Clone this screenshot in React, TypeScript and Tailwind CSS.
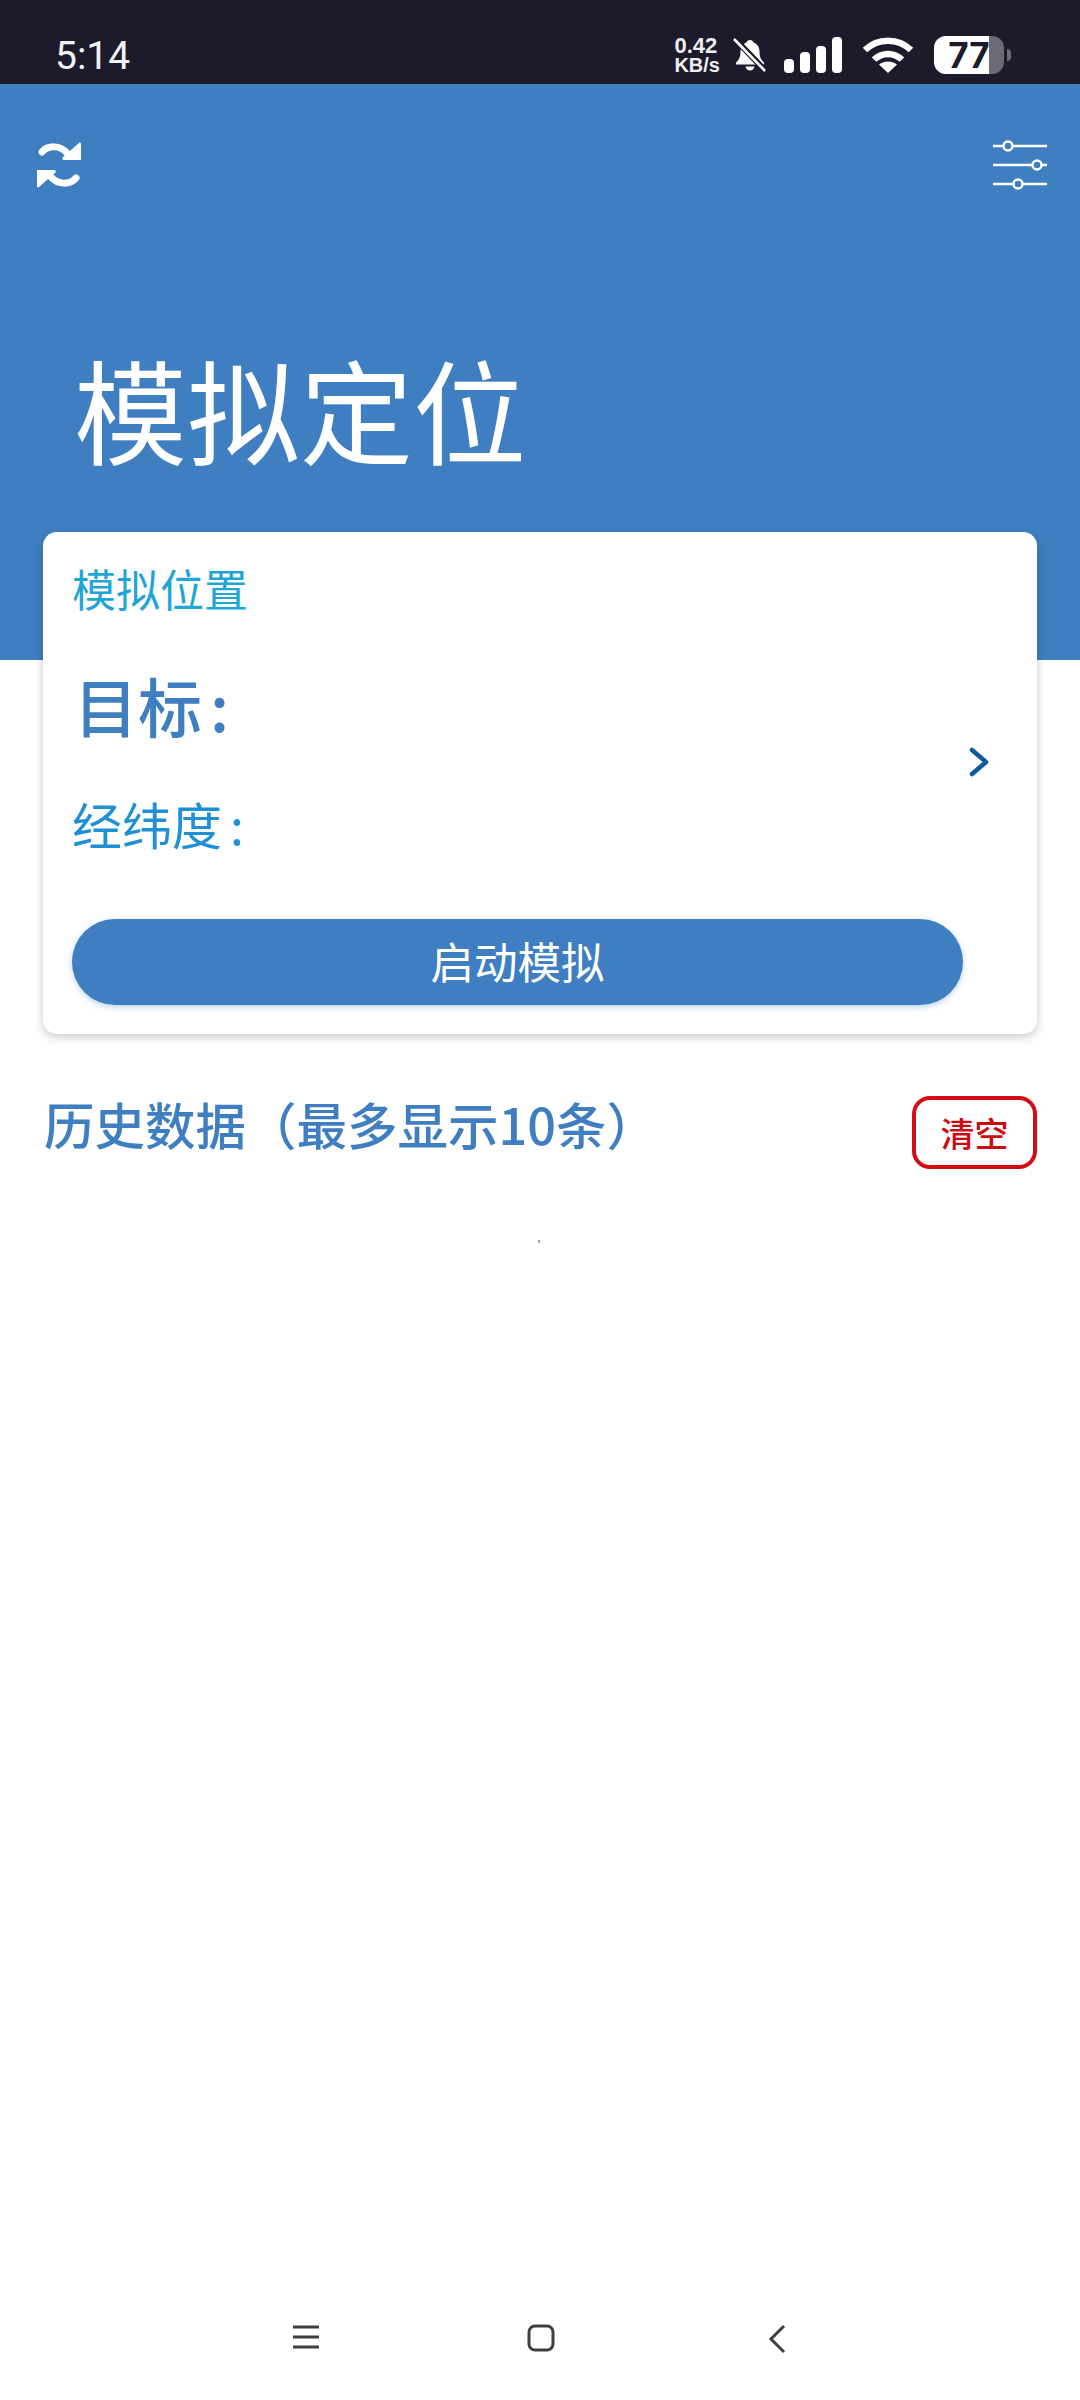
const cjk = { fontFamily: '"Noto Sans CJK SC", "Noto Sans", sans-serif' };

function SyncIcon() {
  return (
    <svg width="46" height="46" viewBox="0 0 46 46" className="shrink-0">
      <path d="M6 10C12 3 24 3 31 11" stroke="#fff" strokeWidth="7" strokeLinecap="round" fill="none" />
      <path d="M45 2 45 18 27 18 C 26 17 26 16 27 15 L43 1 C44 0 45 1 45 2z" fill="#fff" />
      <path d="M40 36C34 43 22 43 15 35" stroke="#fff" strokeWidth="7" strokeLinecap="round" fill="none" />
      <path d="M1 44 1 28 19 28 C 20 29 20 30 19 31 L3 45 C2 46 1 45 1 44z" fill="#fff" />
    </svg>
  );
}

function BellOff() {
  return (
    <svg width="36" height="36" viewBox="0 0 36 36" className="shrink-0">
      <path d="M18 3c-2 0-3 1-3.400 2.600C10.500 7 8.500 10.500 8.500 15c0 5-1.500 8-4.500 10.500v2h28v-2c-3-2.500-4.500-5.500-4.500-10.500 0-4.500-2-8-6-9.400C21 4 20 3 18 3z" fill="#fff" />
      <path d="M13.500 29.500c.5 2.500 2.300 4 4.500 4s4-1.500 4.500-4z" fill="#fff" />
      <path d="M2.500 1.500 32.500 33" stroke="#1c1a2b" strokeWidth="6" />
      <path d="M2 2l31 32" stroke="#fff" strokeWidth="2.600" />
    </svg>
  );
}

function Signal() {
  return (
    <svg width="60" height="36" viewBox="0 0 60 36" className="shrink-0">
      <rect x="0" y="22" width="10" height="14" rx="4" fill="#fff" />
      <rect x="16" y="15" width="10" height="21" rx="4" fill="#fff" />
      <rect x="32" y="9" width="10" height="27" rx="4" fill="#fff" />
      <rect x="48" y="0" width="10" height="36" rx="4" fill="#fff" />
    </svg>
  );
}

function Wifi() {
  return (
    <svg width="52" height="36" viewBox="0 0 52 36" className="shrink-0">
      <path d="M3 13C16 0.500 36 0.500 49 13" stroke="#fff" strokeWidth="6.500" fill="none" />
      <path d="M12 22.500C20 15 32 15 40 22.500" stroke="#fff" strokeWidth="6.500" fill="none" />
      <path d="M17 27.500C22 23.500 30 23.500 35 27.500L26 36z" fill="#fff" />
    </svg>
  );
}

function Sliders() {
  return (
    <svg width="56" height="56" viewBox="0 0 56 56" className="shrink-0" fill="none" stroke="#fff" strokeWidth="2.500">
      <path d="M1 9h11M20 9h35M1 28h40M49 28h6M1 47h21M30 47h25" />
      <circle cx="16" cy="9" r="4.500" />
      <circle cx="45" cy="28" r="4.500" />
      <circle cx="26" cy="47" r="4.500" />
    </svg>
  );
}

export default function App() {
  return (
    <div className="flex h-[2400px] w-[1080px] flex-col overflow-hidden bg-white" style={cjk}>
      <div className="flex h-[84px] shrink-0 items-center justify-between bg-[#1c1a2b] pl-[55px] pr-[69px] pt-[26px]">
        <span className="mt-[1px] text-[39px] leading-[46px] text-[#f2f2f4] font-['Roboto']">5:14</span>
        <div className="flex items-center">
          <div className="mr-[12px] flex flex-col items-start text-[#eeeef0] font-['Liberation_Sans'] font-bold">
            <span className="text-[22px] leading-[21px]">0.42</span>
            <span className="text-[20px] leading-[19px]">KB/s</span>
          </div>
          <BellOff />
          <div className="ml-[16px]"><Signal /></div>
          <div className="ml-[18px]"><Wifi /></div>
          <div className="ml-[20px] flex items-center">
            <div className="relative flex h-[38px] w-[70px] items-center justify-center rounded-[12px] bg-[#6b6a75]">
              <div className="absolute inset-y-0 left-0 w-[55px] rounded-l-[12px] bg-white" />
              <span className="relative text-[35px] font-bold leading-[38px] text-[#1c1a2b] font-['Inter']">77</span>
            </div>
            <div className="ml-[3px] h-[12px] w-[4px] rounded-r-full bg-[#6b6a75]" />
          </div>
        </div>
      </div>

      <div className="h-[576px] shrink-0 bg-[#3f7fc1] pl-[36px] pr-[32px]">
        <div className="flex items-center justify-between pt-[53px]">
          <SyncIcon />
          <Sliders />
        </div>
        <h1 className="mt-[139px] pl-[38px] text-[113px] font-normal leading-[150px] text-white">模拟定位</h1>
      </div>

      <div className="relative z-10 mx-[43px] -mt-[128px] h-[502px] shrink-0 rounded-[14px] bg-white pl-[29px] pr-[48px] pt-[26px] shadow-[0_3px_10px_rgba(0,0,0,0.22)]">
        <div className="text-[44px] leading-[60px] text-[#1fa5d6]">模拟位置</div>
        <div className="flex items-start justify-between">
          <div>
            <div className="mt-[42px] pl-[2px] text-[64px] font-medium leading-[88px] text-[#3f7fc1]">
              目标<span className="ml-[8px]">:</span>
            </div>
            <div className="mt-[39px] text-[50px] leading-[72px] text-[#1f8fd6]">
              经纬度<span className="ml-[8px]">:</span>
            </div>
          </div>
          <svg className="mt-[129px]" width="20" height="30" viewBox="0 0 20 30" fill="none" stroke="#0f5a9c" strokeWidth="4.500" strokeLinecap="round" strokeLinejoin="round">
            <path d="M3 3 17 15 3 27" />
          </svg>
        </div>
        <button className="mt-[60px] flex h-[86px] w-[891px] items-center justify-center rounded-full bg-[#3f7fc1] pb-[2px] text-[43.500px] text-white shadow-[0_2px_6px_rgba(63,127,193,0.35)]">
          启动模拟
        </button>
      </div>

      <div className="mt-[62px] flex shrink-0 items-start justify-between pl-[44px] pr-[43px]">
        <div className="text-[50.500px] font-medium leading-[54px] text-[#3f7fc1]">历史数据（最多显示10条）</div>
        <button className="flex h-[73px] w-[125px] items-center justify-center rounded-[18px] border-[4px] border-[#d40c15] text-[34px] font-medium text-[#cc0a12]">
          清空
        </button>
      </div>

      <div className="ml-[538px] mt-[71px] h-[3px] w-[2px] shrink-0 bg-gray-400" />

      <div className="flex-1" />

      <div className="flex h-[100px] shrink-0 items-start pl-[292px] pt-[24px]">
        <svg width="28" height="26" viewBox="0 0 28 26" fill="none" stroke="#3f3f42" strokeWidth="3">
          <path d="M1 3h26M1 13h26M1 23h26" />
        </svg>
        <svg className="ml-[207px]" width="28" height="28" viewBox="0 0 28 28" fill="none" stroke="#3f3f42" strokeWidth="3">
          <rect x="2" y="2" width="24" height="24" rx="6" />
        </svg>
        <svg className="ml-[213px]" width="18" height="30" viewBox="0 0 18 30" fill="none" stroke="#3f3f42" strokeWidth="3">
          <path d="M16 2 3 15 16 28" />
        </svg>
      </div>
    </div>
  );
}
